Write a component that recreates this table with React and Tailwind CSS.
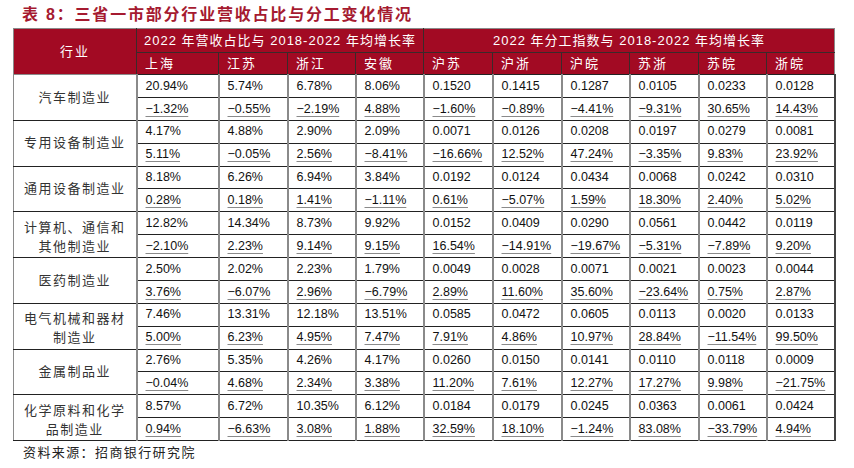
import React from "react";

const rows = [
  ["汽车制造业", ["20.94%","5.74%","6.78%","8.06%","0.1520","0.1415","0.1287","0.0105","0.0233","0.0128"], ["−1.32%","−0.55%","−2.19%","4.88%","−1.60%","−0.89%","−4.41%","−9.31%","30.65%","14.43%"]],
  ["专用设备制造业", ["4.17%","4.88%","2.90%","2.09%","0.0071","0.0126","0.0208","0.0197","0.0279","0.0081"], ["5.11%","−0.05%","2.56%","−8.41%","−16.66%","12.52%","47.24%","−3.35%","9.83%","23.92%"]],
  ["通用设备制造业", ["8.18%","6.26%","6.94%","3.84%","0.0192","0.0124","0.0434","0.0068","0.0242","0.0310"], ["0.28%","0.18%","1.41%","−1.11%","0.61%","−5.07%","1.59%","18.30%","2.40%","5.02%"]],
  ["计算机、通信和|其他制造业", ["12.82%","14.34%","8.73%","9.92%","0.0152","0.0409","0.0290","0.0561","0.0442","0.0119"], ["−2.10%","2.23%","9.14%","9.15%","16.54%","−14.91%","−19.67%","−5.31%","−7.89%","9.20%"]],
  ["医药制造业", ["2.50%","2.02%","2.23%","1.79%","0.0049","0.0028","0.0071","0.0021","0.0023","0.0044"], ["3.76%","−6.07%","2.96%","−6.79%","2.89%","11.60%","35.60%","−23.64%","0.75%","2.87%"]],
  ["电气机械和器材|制造业", ["7.46%","13.31%","12.18%","13.51%","0.0585","0.0472","0.0605","0.0113","0.0020","0.0133"], ["5.00%","6.23%","4.95%","7.47%","7.91%","4.86%","10.97%","28.84%","−11.54%","99.50%"]],
  ["金属制品业", ["2.76%","5.35%","4.26%","4.17%","0.0260","0.0150","0.0141","0.0110","0.0118","0.0009"], ["−0.04%","4.68%","2.34%","3.38%","11.20%","7.61%","12.27%","17.27%","9.98%","−21.75%"]],
  ["化学原料和化学|品制造业", ["8.57%","6.72%","10.35%","6.12%","0.0184","0.0179","0.0245","0.0363","0.0061","0.0424"], ["0.94%","−6.63%","3.08%","1.88%","32.59%","18.10%","−1.24%","83.08%","−33.79%","4.94%"]],
];

const widths = [123, 82, 69, 68, 68, 69, 69, 68, 69, 68, 68];
const sub = ["上海", "江苏", "浙江", "安徽", "沪苏", "沪浙", "沪皖", "苏浙", "苏皖", "浙皖"];

const cjk = { fontFamily: '"Liberation Sans", "Noto Sans CJK SC", sans-serif' };

export default function App() {
  return (
    <div className="w-[854px] h-[468px] bg-white overflow-hidden" style={cjk}>
      <div className="pl-[22px] pt-[5px] h-[28px] text-[16px] leading-[20px] font-bold tracking-[1.8px] text-[#a51a30]">
        表 8：三省一市部分行业营收占比与分工变化情况
      </div>
      <table className="ml-[13px] w-[821px] table-fixed border-collapse text-[12.5px] text-[#111]">
        <colgroup>
          {widths.map((w, i) => (
            <col key={i} style={{ width: w }} />
          ))}
        </colgroup>
        <thead>
          <tr className="h-[24px] bg-[#a20a23] text-white">
            <th rowSpan={2} className="border border-[#8a8a8a] border-r-[#3a2a2a] font-normal text-[13px] tracking-[2px] text-center">
              行业
            </th>
            <th colSpan={4} className="border-t border-t-[#8a8a8a] border-b border-b-[#3a2a2a] border-r border-r-[#3a2a2a] font-normal text-[13px] tracking-[1px] text-center">
              2022 年营收占比与 2018-2022 年均增长率
            </th>
            <th colSpan={6} className="border-t border-t-[#8a8a8a] border-b border-b-[#3a2a2a] border-r border-r-[#8a8a8a] font-normal text-[13px] tracking-[1px] text-center">
              2022 年分工指数与 2018-2022 年均增长率
            </th>
          </tr>
          <tr className="h-[22px] bg-[#a20a23] text-white">
            {sub.map((s, i) => (
              <th key={s} className={`border-r ${i === 9 ? "border-r-[#8a8a8a]" : "border-r-[#3a2a2a]"} border-b border-b-[#222] font-normal text-left pl-[8px] text-[13px] tracking-[2px]`}>
                {s}
              </th>
            ))}
          </tr>
        </thead>
        <tbody>
          {rows.map(([name, a, b], ri) => {
            const lines = name.split("|");
            return (
              <React.Fragment key={ri}>
                <tr className="h-[22.875px]">
                  <td rowSpan={2} className="border-l border-l-[#8a8a8a] border-r-2 border-r-[#8a8a8a] border-b border-b-[#222] text-center text-[13px] tracking-[1.5px] text-[#333]">
                    {lines.length > 1 ? (
                      <div className="leading-[19px] pt-[4px]">
                        {lines.map((l) => (
                          <div key={l}>{l}</div>
                        ))}
                      </div>
                    ) : (
                      name
                    )}
                  </td>
                  {a.map((v, i) => (
                    <td key={i} className={`pl-[8px] border-b border-b-[#222] border-r-2 ${i === 9 ? "border-r-[#444]" : "border-r-[#8a8a8a]"} leading-none`}>
                      {v}
                    </td>
                  ))}
                </tr>
                <tr className="h-[22.875px]">
                  {b.map((v, i) => (
                    <td key={i} className={`pl-[8px] border-b border-b-[#222] border-r-2 ${i === 9 ? "border-r-[#444]" : "border-r-[#8a8a8a]"} leading-none`}>
                      <span className="underline decoration-[#8a8a8a] underline-offset-[3px]">{v}</span>
                    </td>
                  ))}
                </tr>
              </React.Fragment>
            );
          })}
        </tbody>
      </table>
      <div className="pl-[23px] pt-[3px] text-[13px] leading-[18px] tracking-[1.4px] text-[#222]">
        资料来源：招商银行研究院
      </div>
    </div>
  );
}
